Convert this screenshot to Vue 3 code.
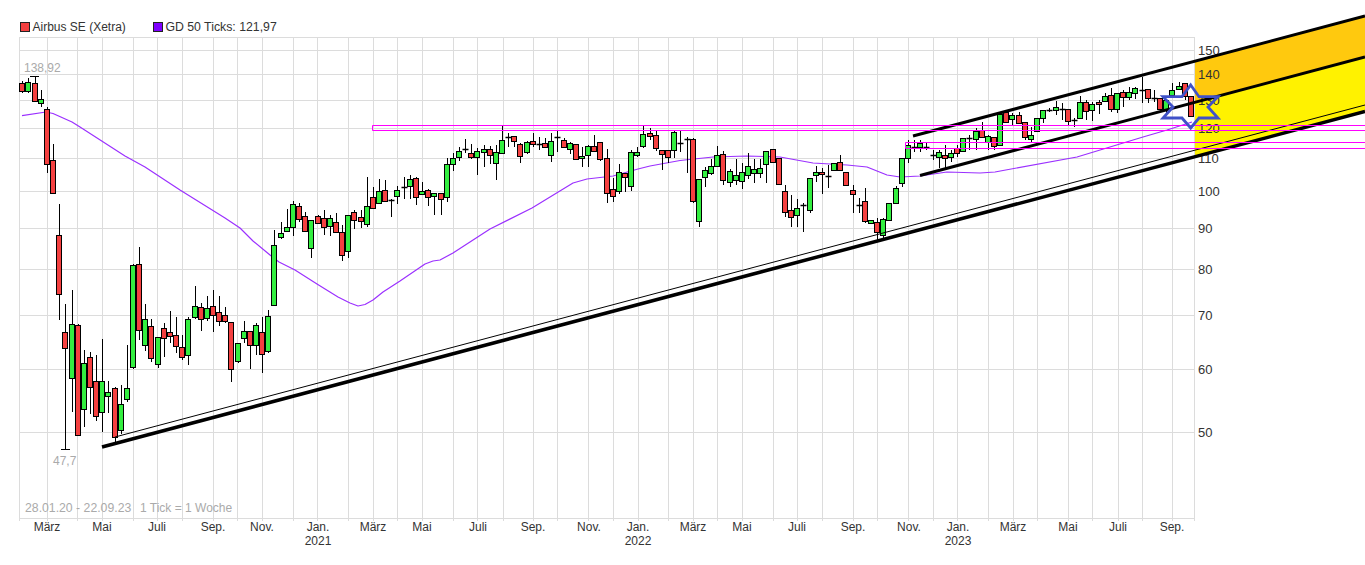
<script setup>
const vLines = [19,47,77,102,133,157,182,213,237,262,293,317,348,373,397,422,453,477,503,533,557,588,613,638,668,693,717,742,773,797,822,853,877,908,933,957,988,1013,1037,1068,1092,1118,1142,1172,1194]
const hLines = [37,50,74,100,128,158,191,228,269,315,369,432,518]
const yLabels = [[150,50],[140,74],[130,100],[120,128],[110,158],[100,191],[90,228],[80,269],[70,315],[60,369],[50,432]]
const months = [['März',47],['Mai',102],['Juli',157],['Sep.',213],['Nov.',262],['Jan.',318],['März',373],['Mai',422],['Juli',478],['Sep.',533],['Nov.',589],['Jan.',638],['März',693],['Mai',742],['Juli',797],['Sep.',853],['Nov.',909],['Jan.',958],['März',1013],['Mai',1068],['Juli',1118],['Sep.',1172]]
const years = [['2021',318],['2022',638],['2023',958]]

// type, body top, body bottom, wick top, wick bottom (page pixels)
const raw = [
['r',83,91,81,93],['g',82,91,78,93],['r',83,101,76,101],['g',99,103,90,107],['r',109,164,107,173],['r',160,193,144,194],['r',235,294,204,320],['r',332,348,304,449],['g',324,378,290,412],['r',325,435,324,435],
['g',363,409,350,427],['r',357,387,352,414],['r',381,416,355,421],['g',381,412,339,432],['g',392,396,381,413],['r',388,437,387,444],['g',404,430,385,434],['g',388,399,345,402],['g',265,367,264,369],['r',264,330,247,340],
['g',319,345,304,351],['r',326,358,319,362],['g',337,364,337,368],['r',328,338,323,357],['r',332,336,311,343],['r',335,346,317,353],['r',347,357,335,360],['g',319,355,317,365],['g',306,317,286,319],['r',307,319,303,331],
['g',308,318,296,321],['r',306,315,290,332],['r',312,321,296,326],['r',315,321,307,323],['r',322,369,322,382],['g',343,361,343,363],['g',331,338,321,343],['r',331,345,331,369],['g',325,345,323,355],['r',332,354,317,373],
['g',316,351,310,353],['g',245,305,230,305],['g',233,237,222,239],['g',227,231,209,231],['g',204,227,201,236],['r',206,219,203,222],['r',216,231,212,231],['g',220,248,220,258],['r',216,223,215,223],['r',218,227,210,235],
['g',218,226,215,236],['r',222,232,213,233],['r',232,255,225,261],['g',215,251,215,258],['r',212,220,210,229],['r',217,221,210,228],['g',206,224,177,227],['r',197,208,187,208],['g',191,203,179,204],['r',190,201,180,201],
['d',200,200,199,217],['g',190,196,186,204],['d',187,187,177,199],['g',179,186,175,199],['r',178,197,177,205],['g',191,194,182,195],['r',190,197,189,206],['g',193,196,193,215],['r',193,199,193,215],['g',164,197,158,202],
['g',158,164,153,171],['g',151,157,147,161],['d',149,149,139,153],['r',153,157,144,159],['g',151,157,148,175],['g',149,152,145,167],['r',149,155,146,164],['g',152,163,145,180],['g',140,153,125,153],['d',137,137,133,147],
['r',136,141,136,147],['r',144,156,143,163],['g',142,152,141,154],['r',141,144,133,147],['d',144,144,137,150],['r',143,147,138,147],['g',141,155,133,162],['d',137,137,131,152],['r',140,147,138,147],['g',143,149,142,154],
['r',144,159,144,159],['g',156,158,147,167],['g',146,155,145,167],['r',146,151,135,151],['r',142,159,142,161],['r',158,193,149,203],['r',189,196,178,202],['g',172,191,164,194],['r',173,177,173,192],['g',152,186,150,191],
['g',152,155,147,157],['g',134,146,125,148],['r',133,136,128,140],['r',135,148,131,151],['r',150,154,150,170],['r',150,157,150,163],['g',132,150,130,158],['d',143,143,131,152],['d',139,139,137,173],['r',139,201,138,203],
['g',179,221,179,227],['g',170,177,167,187],['g',166,173,159,175],['g',155,166,146,166],['r',154,180,151,185],['g',171,182,169,187],['g',175,180,159,185],['g',172,181,163,189],['g',166,175,153,179],['g',169,173,159,183],
['g',168,173,159,178],['g',151,164,151,183],['r',149,162,149,162],['r',158,184,158,184],['r',191,212,185,217],['r',210,217,195,227],['g',208,215,199,227],['d',205,205,203,232],['g',178,210,178,213],['g',172,175,166,182],
['r',172,174,168,194],['d',176,176,165,188],['g',163,170,163,171],['r',162,170,155,170],['r',172,185,172,185],['r',190,194,185,213],['d',205,205,198,213],['r',201,221,188,223],['g',220,223,220,223],['r',222,232,218,240],
['g',219,235,218,239],['g',203,220,203,220],['g',188,203,186,203],['g',158,183,158,187],['g',145,158,140,163],['d',147,147,140,152],['g',143,147,140,152],['d',147,147,142,150],['d',155,155,150,160],['g',152,157,150,168],
['r',155,158,145,168],['g',153,157,150,162],['r',148,153,145,157],['g',138,151,138,151],['d',138,138,135,150],['g',131,139,128,150],['r',130,137,122,137],['g',136,142,135,150],['r',137,146,137,150],['g',114,145,112,145],
['r',112,122,112,122],['g',115,119,113,125],['r',115,123,112,123],['r',122,137,122,140],['g',135,139,127,143],['g',118,131,118,131],['g',110,118,110,123],['d',110,110,108,112],['g',107,110,101,115],['d',109,109,103,120],
['r',109,121,109,126],['d',120,120,118,127],['g',102,118,96,118],['r',102,111,100,120],['g',104,110,102,121],['r',102,104,100,114],['g',96,101,93,102],['r',95,109,88,112],['g',93,109,93,113],['r',92,97,90,107],
['g',92,97,87,100],['g',88,93,87,99],['d',90,90,77,103],['r',89,98,89,103],['d',98,98,90,102],['r',98,109,98,110],['g',100,109,99,113],['g',90,95,83,97],['g',86,89,82,89],['r',83,96,83,100],['r',96,116,96,117]
]
const candles = raw.map(([type, top, bottom, wt, wb], i) => ({
  x: Math.floor(22.8 + 6.15 * i) + 0.5,
  type, top: top + 0.5, bottom: bottom + 0.5, wt, wb
}))

const ma = '22,115.6 46,112 53,113.5 72,122 80,127 125,156 145,167 180,190 225,218 240,228 253,241 270,255 279,262 295,270 317,284 338,297 350,303 358,306 365,304.5 373,300 383,292 400,281 425,264 433,261 440,260 453,253 490,229 532,208 573,183 587,179 613,176 638,169 650,166 680,160.5 713,157 747,156 780,157 813,163 847,165 867,167 887,175 900,177 920,176 947,172 980,173 995,172 1003,170.5 1077,157 1110,147 1143,137 1167,130 1192,122'
</script>

<template>
  <div class="page">
    <div class="legend">
      <span class="key"><i class="swatch red"></i>Airbus SE (Xetra)</span>
      <span class="key wide"><i class="swatch violet"></i>GD 50 Ticks: 121,97</span>
    </div>
    <svg class="chart" width="1365" height="527" viewBox="0 38 1365 527">
      <g class="grid">
        <line v-for="x in vLines" :key="'v' + x" :x1="x + 0.5" :x2="x + 0.5" y1="37" y2="521" />
        <line v-for="y in hLines" :key="'h' + y" x1="19" x2="1195" :y1="y + 0.5" :y2="y + 0.5" />
      </g>
      <polyline class="ma" :points="ma" />
      <g v-for="c in candles" :key="c.x">
        <line class="wick" :x1="c.x" :x2="c.x" :y1="c.wt" :y2="c.wb" />
        <line v-if="c.type === 'd'" class="doji" :x1="c.x - 3" :x2="c.x + 3" :y1="c.top" :y2="c.top" />
        <rect v-else :class="c.type === 'g' ? 'up' : 'down'" :x="c.x - 3" :y="c.top" width="5" :height="c.bottom - c.top" />
      </g>
      <line class="wick" x1="30" x2="39" y1="76.5" y2="76.5" />
      <line class="wick" x1="61" x2="70" y1="449.5" y2="449.5" />
      <polygon class="orange" points="1195,61 1365,16 1365,57 1195,102" />
      <polygon class="yellow" points="1195,102 1365,57 1365,111.5 1195,156.5" />
      <text v-for="l in yLabels" :key="l[0]" class="axis" x="1198" :y="l[1] + 5">{{ l[0] }}</text>
      <text v-for="m in months" :key="m[1]" class="month" :x="m[1]" y="531">{{ m[0] }}</text>
      <text v-for="m in years" :key="m[0]" class="month" :x="m[1]" y="545">{{ m[0] }}</text>
      <text class="note" x="24" y="72">138,92</text>
      <text class="note" x="53" y="465">47,7</text>
      <text class="note date" x="25" y="512">28.01.20 - 22.09.23</text>
      <text class="note" x="140" y="512">1 Tick = 1 Woche</text>
      <line class="thin" x1="115" y1="437" x2="1365" y2="105" />
      <line class="thick base" x1="102" y1="447" x2="1365" y2="111.5" />
      <line class="thick" x1="913" y1="136" x2="1365" y2="16" />
      <line class="thick" x1="920" y1="175.5" x2="1365" y2="57" />
      <path class="magenta" d="M1365 125.5H372.5V130.5H1365M1365 142.5H905.5V148.5H1365" />
      <polygon class="star" points="1190.7,85 1199,96.7 1218,96.7 1208,107 1218,118 1199,118 1190.7,128 1182,118 1163,118 1173,107 1163,96.7 1182,96.7" />
    </svg>
  </div>
</template>

<style scoped>
.page {
  width: 1365px;
  height: 565px;
  overflow: hidden;
  background: #fff;
  font-family: "Liberation Sans", Arial, sans-serif;
}
.legend {
  height: 38px;
  box-sizing: border-box;
  padding: 20px 0 0 20px;
  display: flex;
  align-items: flex-start;
  gap: 27px;
  font-size: 12px;
  line-height: 14px;
  color: #333;
}
.key {
  display: flex;
  align-items: center;
  gap: 2.5px;
}
.wide { font-size: 12.3px; }
.swatch {
  display: block;
  width: 8px;
  height: 8px;
  border: 1px solid #222;
}
.red { background: #f44040; }
.violet { background: #7f00ff; }
.chart {
  display: block;
  overflow: visible;
  font-family: "Liberation Sans", Arial, sans-serif;
}
.grid line { stroke: #dcdcdc; stroke-width: 1; }
.ma { fill: none; stroke: #9b30ff; stroke-width: 1.2; stroke-linejoin: round; }
.wick { stroke: #000; stroke-width: 1; }
.doji { stroke: #000; stroke-width: 1.5; }
.up { fill: #33ee40; stroke: #000; stroke-width: 1; }
.down { fill: #f44040; stroke: #000; stroke-width: 1; }
.orange { fill: #ffc90e; }
.yellow { fill: #fff200; }
.axis { font-size: 13px; fill: #333; }
.month { font-size: 12px; fill: #333; text-anchor: middle; }
.note { font-size: 12px; fill: #aaa; }
.date { font-size: 12.25px; }
.thin { stroke: #000; stroke-width: 1; }
.thick { stroke: #000; stroke-width: 3; }
.base { stroke-width: 3.5; }
.magenta { fill: none; stroke: #ff00ff; stroke-width: 1; }
.star { fill: none; stroke: #3f51c8; stroke-width: 2.8; }
</style>
